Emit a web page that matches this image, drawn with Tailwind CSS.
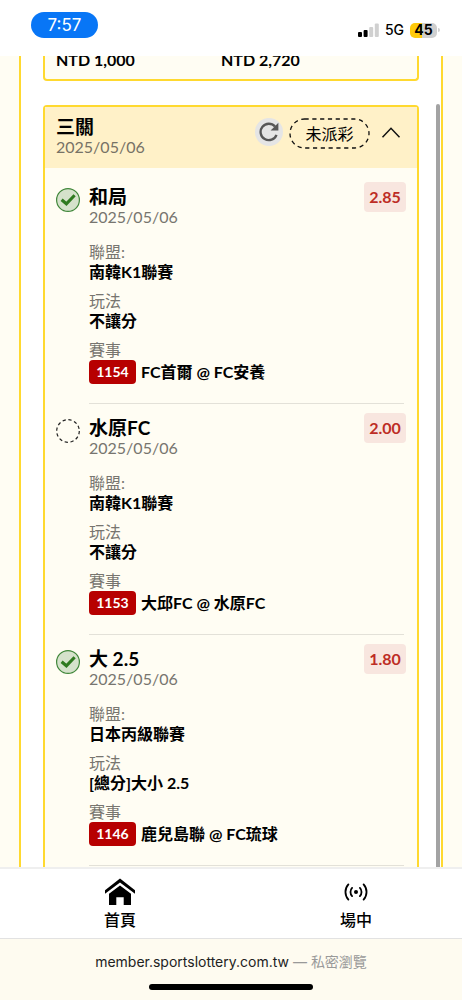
<!DOCTYPE html>
<html lang="zh-Hant">
<head>
<meta charset="utf-8">
<meta name="viewport" content="width=device-width, initial-scale=1">
<title>未派彩投注</title>
<script src="https://cdn.jsdelivr.net/npm/@tailwindcss/browser@4"></script>
</head>
<body class="flex h-screen flex-col overflow-hidden bg-[#fffdf3] font-['Lato','Noto_Sans_CJK_TC',sans-serif] text-base text-black">

<header class="flex h-14 shrink-0 items-start justify-between bg-white pl-[31px] pr-[22px] pt-3">
  <time class="flex h-[26px] w-[67px] items-center justify-center rounded-full bg-[#0876f6] pt-px font-['Inter',sans-serif] text-[17px] text-white">7:57</time>
  <div class="mt-[9px] flex h-[18px] items-center font-['Inter',sans-serif]">
    <svg class="mr-[6px] h-[14px] w-[21px]" viewBox="0 0 21 14" aria-label="訊號">
      <rect x="0" y="9" width="4" height="5" rx="1"/><rect x="5.6" y="7" width="4" height="7" rx="1"/>
      <rect x="11.2" y="4" width="4" height="10" rx="1" fill="#d0d0d0"/><rect x="16.8" y="0.5" width="4" height="13.5" rx="1" fill="#d0d0d0"/>
    </svg>
    <span class="mr-[6px] text-sm font-medium">5G</span>
    <span class="flex h-[15px] w-[27px] items-center justify-center rounded-[5px] bg-linear-to-r from-[#ffca0a] from-45% to-[#cfcfcf] to-45% text-sm font-bold">45</span>
    <span class="ml-px h-1 w-[2px] rounded-r-full bg-[#cfcfcf]"></span>
  </div>
</header>

<main class="min-h-0 flex-1 overflow-hidden px-[19px]">
  <div class="relative flow-root h-full border-x-2 border-[#ffd92f] bg-white px-[22px]">
    <div class="absolute bottom-0 right-px top-12 w-1 rounded-t-full bg-[#a3a3a3]"></div>

    <section class="-mt-2 grid grid-cols-[165px_1fr] rounded-b border-2 border-t-0 border-[#ffd92f] bg-[#fffdf3] pb-[7px] pl-[11px] text-base leading-6 font-bold">
      <span>NTD 1,000</span><span>NTD 2,720</span>
    </section>

    <section class="mt-6 rounded-t border-2 border-b-0 border-[#ffd92f] bg-[#fffdf3]">
      <div class="flex h-[61px] bg-[#fff1c8] pl-[11px] pr-4 pt-[10px]">
        <div class="flex-1">
          <h2 class="text-[19px] leading-5 font-bold">三關</h2>
          <p class="leading-5 text-[#777266]">2025/05/06</p>
        </div>
        <button class="mt-[1px] flex size-7 items-center justify-center rounded-full bg-[#e5e5e5]" aria-label="重新整理">
          <svg class="size-5" viewBox="0 0 20 20" fill="none"><path d="M17.5 12.8A8.2 8.2 0 1 1 16 4.6" stroke="#575757" stroke-width="2.3"/><path d="M19.4.8V8.6H11.6Z" fill="#575757"/></svg>
        </button>
        <span class="relative ml-[6px] mt-px flex h-[31px] w-[81px] items-center justify-center">
          <svg class="absolute inset-0 size-full" viewBox="0 0 81 31" fill="none" stroke="#111" stroke-width="1.3" stroke-dasharray="4.2 3.6"><rect x="1" y="1" width="79" height="29" rx="14.5"/></svg>
          <span>未派彩</span>
        </span>
        <button class="ml-[11px] mt-2 h-4 w-5" aria-label="收合">
          <svg class="h-4 w-5" viewBox="0 0 20 16" fill="none" stroke="#111" stroke-width="1.5"><path d="M1.5 12.3 10 3.3l8.5 9"/></svg>
        </button>
      </div>

      <div class="pt-[5px]">
        <article class="flex pl-[11px] pr-[13px] pt-[9px]">
          <svg class="mr-[9px] mt-[6px] size-6 shrink-0" viewBox="0 0 24 24" fill="none" aria-label="過關"><circle cx="12" cy="12" r="11.4" fill="#d5e2cb" stroke="#40873a" stroke-width="1.2"/><path d="m5.6 11.8 4.8 4L18.6 7.2" stroke="#2f7a20" stroke-width="3.1"/></svg>
          <div class="flex-1 border-b border-[#e3e1d8] pb-[19px]">
            <div class="-mr-[2px] flex items-start justify-between">
              <div class="pt-[5px]"><h3 class="text-[19px] leading-5 font-bold">和局</h3><p class="leading-5 text-[#77756f]">2025/05/06</p></div>
              <strong class="flex h-[30px] w-[42px] items-center justify-center rounded bg-[#f8e6df] font-bold text-[#bd2d25]">2.85</strong>
            </div>
            <dl class="mt-[15px] leading-5">
              <dt class="text-[#77756f]">聯盟:</dt><dd class="font-bold">南韓K1聯賽</dd>
              <dt class="mt-[9px] text-[#77756f]">玩法</dt><dd class="font-bold">不讓分</dd>
              <dt class="mt-[9px] text-[#77756f]">賽事</dt>
              <dd class="flex h-6 items-center font-bold"><span class="mr-[5px] flex h-6 w-[47px] items-center justify-center rounded bg-[#b70000] text-sm text-white">1154</span>FC首爾 @ FC安養</dd>
            </dl>
          </div>
        </article>

        <article class="flex pl-[11px] pr-[13px] pt-[9px]">
          <svg class="mr-[9px] mt-[6px] size-6 shrink-0" viewBox="0 0 24 24" fill="none" aria-label="未開賽"><circle cx="12" cy="12" r="11.3" stroke="#222" stroke-width="1.2" stroke-dasharray="3.3 2.62"/></svg>
          <div class="flex-1 border-b border-[#e3e1d8] pb-[19px]">
            <div class="-mr-[2px] flex items-start justify-between">
              <div class="pt-[5px]"><h3 class="text-[19px] leading-5 font-bold">水原FC</h3><p class="leading-5 text-[#77756f]">2025/05/06</p></div>
              <strong class="flex h-[30px] w-[42px] items-center justify-center rounded bg-[#f8e6df] font-bold text-[#bd2d25]">2.00</strong>
            </div>
            <dl class="mt-[15px] leading-5">
              <dt class="text-[#77756f]">聯盟:</dt><dd class="font-bold">南韓K1聯賽</dd>
              <dt class="mt-[9px] text-[#77756f]">玩法</dt><dd class="font-bold">不讓分</dd>
              <dt class="mt-[9px] text-[#77756f]">賽事</dt>
              <dd class="flex h-6 items-center font-bold"><span class="mr-[5px] flex h-6 w-[47px] items-center justify-center rounded bg-[#b70000] text-sm text-white">1153</span>大邱FC @ 水原FC</dd>
            </dl>
          </div>
        </article>

        <article class="flex pl-[11px] pr-[13px] pt-[9px]">
          <svg class="mr-[9px] mt-[6px] size-6 shrink-0" viewBox="0 0 24 24" fill="none" aria-label="過關"><circle cx="12" cy="12" r="11.4" fill="#d5e2cb" stroke="#40873a" stroke-width="1.2"/><path d="m5.6 11.8 4.8 4L18.6 7.2" stroke="#2f7a20" stroke-width="3.1"/></svg>
          <div class="flex-1 border-b border-[#e3e1d8] pb-[19px]">
            <div class="-mr-[2px] flex items-start justify-between">
              <div class="pt-[5px]"><h3 class="text-[19px] leading-5 font-bold">大 2.5</h3><p class="leading-5 text-[#77756f]">2025/05/06</p></div>
              <strong class="flex h-[30px] w-[42px] items-center justify-center rounded bg-[#f8e6df] font-bold text-[#bd2d25]">1.80</strong>
            </div>
            <dl class="mt-[15px] leading-5">
              <dt class="text-[#77756f]">聯盟:</dt><dd class="font-bold">日本丙級聯賽</dd>
              <dt class="mt-[9px] text-[#77756f]">玩法</dt><dd class="font-bold">[總分]大小 2.5</dd>
              <dt class="mt-[9px] text-[#77756f]">賽事</dt>
              <dd class="flex h-6 items-center font-bold"><span class="mr-[5px] flex h-6 w-[47px] items-center justify-center rounded bg-[#b70000] text-sm text-white">1146</span>鹿兒島聯 @ FC琉球</dd>
            </dl>
          </div>
        </article>
        <div class="h-5"></div>
      </div>
    </section>
  </div>
</main>

<nav class="flex h-[72px] shrink-0 justify-between border-b border-t-2 border-t-[#efefef] border-b-[#e2e2e2] bg-white pl-[88px] pr-[74px]">
  <a href="#" class="flex w-16 flex-col items-center pt-[9px] font-medium">
    <svg class="h-7 w-[30px]" viewBox="0 0 30 28"><path d="M0 12.2 15 .5l15 11.7v3.6L15 4.4 0 15.8Z"/><path d="M4 15.8 15 7.6l11 8.2V27h-7.3v-7.8h-7.4V27H4Z"/></svg>
    <span class="mt-[2px] leading-6">首頁</span>
  </a>
  <a href="#" class="flex w-16 flex-col items-center pt-[9px] font-medium">
    <svg class="h-7 w-6" viewBox="0 0 24 28" fill="none" stroke="#000" stroke-width="1.8" stroke-linecap="round"><circle cx="12" cy="14" r="2" fill="#000" stroke="none"/><path d="M8.1 9.9a6 6 0 0 0 0 8.2M15.9 9.9a6 6 0 0 1 0 8.2M4.4 6.4a11.3 11.3 0 0 0 0 15.2M19.6 6.4a11.3 11.3 0 0 1 0 15.2"/></svg>
    <span class="mt-[2px] leading-6">場中</span>
  </a>
</nav>

<footer class="flex h-[61px] shrink-0 flex-col items-center bg-[#fefbf0] pt-3">
  <p class="font-['Inter','Noto_Sans_CJK_TC',sans-serif] text-sm leading-[22px] text-[#222]">member.sportslottery.com.tw <span class="text-[#999]">— 私密瀏覽</span></p>
  <div class="mt-[11px] h-[6px] w-[164px] rounded-full bg-black"></div>
</footer>
</body>
</html>
